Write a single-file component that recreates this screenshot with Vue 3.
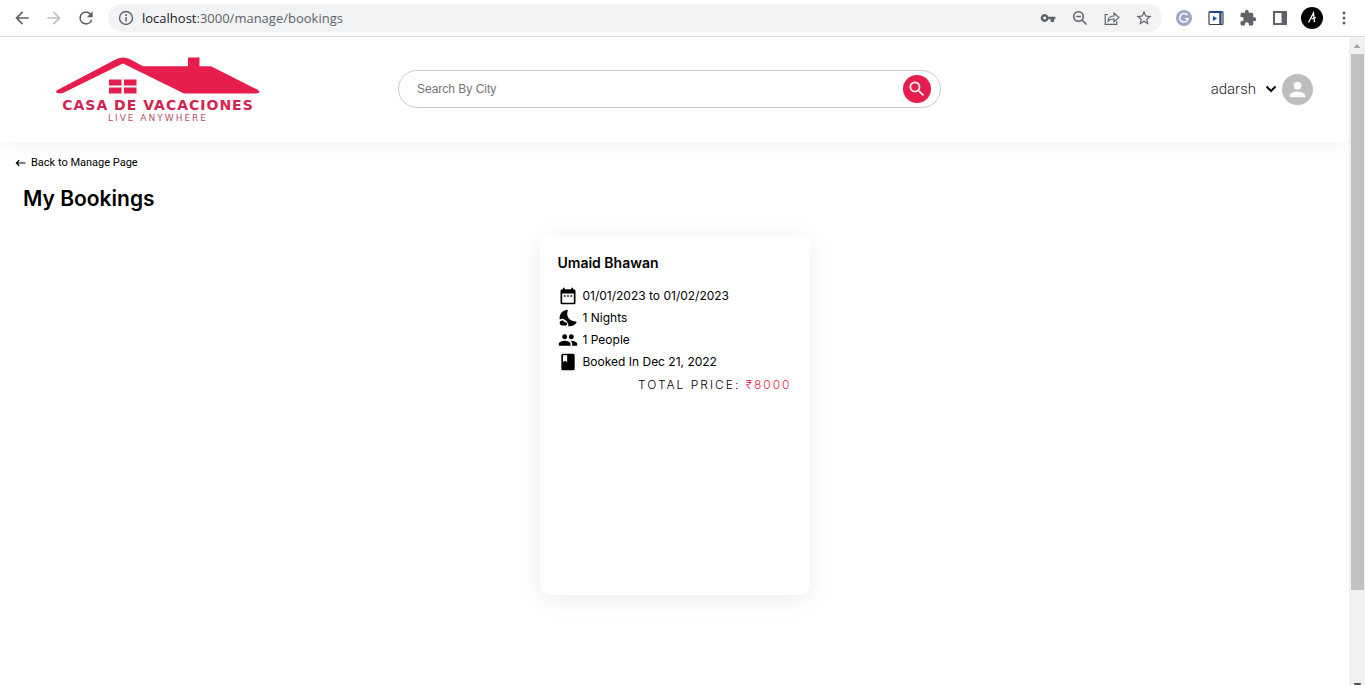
<script setup>
import { ref } from 'vue'

const address = ref('localhost:3000/manage/bookings')
const city = ref('')

const bookings = [
  {
    name: 'Umaid Bhawan',
    price: '₹8000',
    details: [
      {
        text: '01/01/2023 to 01/02/2023',
        icon: 'M19 4h-1V2h-2v2H8V2H6v2H5c-1.110 0-1.990.9-1.990 2L3 20c0 1.100.89 2 2 2h14c1.100 0 2-.9 2-2V6c0-1.100-.9-2-2-2zm0 16H5V9h14v11zM7 11h2v2H7zm4 0h2v2h-2zm4 0h2v2h-2z'
      },
      {
        text: '1 Nights',
        icon: 'M11.650 3.460c.27-.71-.36-1.450-1.120-1.340-5.520.8-9.470 5.960-8.430 11.750.02.110.05.210.07.320C2.940 13.440 3.930 13 5 13c1.440 0 2.770.66 3.630 1.740 1.340.29 2.370 1.380 2.570 2.750 1.350 1.050 1.620 2.900.99 4.300.59.130 1.190.210 1.810.210 3.350 0 6.320-1.650 8.140-4.180.45-.61.05-1.490-.71-1.540C13.790 15.800 9.230 9.850 11.650 3.460zM7.490 16.560C7.110 15.660 6.130 15 5 15c-1.660 0-3 1.340-3 3s1.340 3 3 3h4c1.100 0 2-.9 2-2s-.9-2-2-2c-.5-.1-1-.3-1.510-.440z'
      },
      {
        text: '1 People',
        icon: 'M16 11c1.660 0 2.990-1.340 2.990-3S17.660 5 16 5s-3 1.340-3 3 1.340 3 3 3zm-8 0c1.660 0 2.990-1.340 2.990-3S9.660 5 8 5 5 6.340 5 8s1.340 3 3 3zm0 2c-2.330 0-7 1.170-7 3.500V19h14v-2.500c0-2.330-4.670-3.500-7-3.500zm8 0c-.29 0-.62.020-.97.050 1.160.84 1.970 1.970 1.970 3.450V19h6v-2.500c0-2.330-4.670-3.500-7-3.500z'
      },
      {
        text: 'Booked In Dec 21, 2022',
        icon: 'M18 2H6c-1.100 0-2 .9-2 2v16c0 1.100.9 2 2 2h12c1.100 0 2-.9 2-2V4c0-1.100-.9-2-2-2zM6 4h5v8l-2.500-1.500L6 12V4z'
      }
    ]
  }
]
</script>

<template>
  <div class="window">
    <div class="toolbar">
      <button class="tool" aria-label="Back">
        <svg viewBox="0 0 24 24" class="i20"><path d="M20 11H7.830l5.590-5.590L12 4l-8 8 8 8 1.410-1.410L7.830 13H20z" /></svg>
      </button>
      <button class="tool faded" aria-label="Forward">
        <svg viewBox="0 0 24 24" class="i20"><path d="M12 4l-1.410 1.410L16.170 11H4v2h12.170l-5.580 5.590L12 20l8-8z" /></svg>
      </button>
      <button class="tool" aria-label="Reload">
        <svg viewBox="0 0 24 24" class="i20"><path d="M17.650 6.350A7.960 7.960 0 0 0 12 4a8 8 0 1 0 7.730 10h-2.080A6 6 0 1 1 12 6c1.660 0 3.140.69 4.220 1.780L13 11h7V4z" /></svg>
      </button>
      <div class="address">
        <svg viewBox="0 0 16 16" class="i16"><circle cx="8" cy="8" r="6.500" fill="none" stroke="currentColor" stroke-width="1.400" /><path d="M7.200 7h1.600v4.500H7.200zM7.200 4.300h1.600v1.600H7.200z" /></svg>
        <span class="url"><input v-model="address" aria-label="Address" class="urlbox" /><span class="urltext" aria-hidden="true"><b>localhost</b>:3000/manage/bookings</span></span>
        <button class="tool" aria-label="Passwords">
          <svg viewBox="0 0 24 24" class="i16"><path d="M12.650 10A6 6 0 1 0 12.650 14H16v4h5v-4h2v-4H12.650zM7 14.200a2.200 2.200 0 1 1 0-4.400 2.200 2.200 0 0 1 0 4.400z" /></svg>
        </button>
        <button class="tool" aria-label="Zoom">
          <svg viewBox="0 0 16 16" class="i16 line"><circle cx="6.500" cy="6.500" r="4.800" /><path d="M10 10l4.500 4.500M4.200 6.500h4.600" /></svg>
        </button>
        <button class="tool" aria-label="Share">
          <svg viewBox="0 0 16 16" class="i16 line thin"><path d="M4 4.500H1.200v9.800h11.600v-3M4 11c.4-3.500 2.500-5 6-5V3l5 4.600-5 4.200V9c-2.700 0-4.500.5-6 2z" /></svg>
        </button>
        <button class="tool" aria-label="Bookmark">
          <svg viewBox="0 0 24 24" class="i18"><path d="M22 9.240l-7.190-.62L12 2 9.190 8.630 2 9.240l5.460 4.730L5.820 21 12 17.270 18.180 21l-1.630-7.030L22 9.240zM12 15.400l-3.760 2.270 1-4.280-3.320-2.880 4.380-.38L12 6.100l1.710 4.040 4.380.38-3.320 2.880 1 4.280L12 15.400z" /></svg>
        </button>
      </div>
      <div class="extensions">
        <button class="tool" aria-label="Grammar extension">
          <svg viewBox="0 0 16 16" class="i16"><circle cx="8" cy="8" r="8" fill="#9fa8c7" /><path d="M11.500 5.200A4.300 4.300 0 1 0 12.200 8.800H9.200" fill="none" stroke="#fff" stroke-width="1.400" /></svg>
        </button>
        <button class="tool" aria-label="Player extension">
          <svg viewBox="0 0 16 16" class="i16"><rect x="1" y="1.500" width="14" height="13" rx="1" fill="#fff" stroke="#3c4043" stroke-width="1.200" /><path d="M13 2h1.400v12H13z" fill="#8a8f96" /><path d="M2 1h12v2H2zM11.300 2h1.700v12h-1.700z" fill="#1f4690" /><path d="M5 6l4 2.500L5 11z" fill="#174ea6" /></svg>
        </button>
        <button class="tool" aria-label="Extensions">
          <svg viewBox="0 0 24 24" class="i18"><path d="M20.500 11H19V7c0-1.100-.9-2-2-2h-4V3.500a2.500 2.500 0 0 0-5 0V5H4c-1.100 0-2 .9-2 2v3.800h1.500a2.700 2.700 0 0 1 0 5.400H2V20c0 1.100.9 2 2 2h3.800v-1.500a2.700 2.700 0 0 1 5.400 0V22H17c1.100 0 2-.9 2-2v-4h1.500a2.500 2.500 0 0 0 0-5z" /></svg>
        </button>
        <button class="tool" aria-label="Side panel">
          <svg viewBox="0 0 16 16" class="i16"><path d="M1 1h14v14H1zM3 3v10h6.500V3z" fill-rule="evenodd" /></svg>
        </button>
        <button class="tool" aria-label="Profile">
          <svg viewBox="0 0 22 22" class="i22"><circle cx="11" cy="11" r="11" fill="#000" /><path d="M7.500 15.500l5-9.500 1 9M10.500 12l4.500-1.500" fill="none" stroke="#fff" stroke-width="1.300" /></svg>
        </button>
        <button class="tool" aria-label="Menu">
          <svg viewBox="0 0 16 16" class="i16"><circle cx="8" cy="3" r="1.500" /><circle cx="8" cy="8" r="1.500" /><circle cx="8" cy="13" r="1.500" /></svg>
        </button>
      </div>
    </div>

    <div class="viewport">
      <div class="page">
        <header class="header">
          <a href="#" class="logo">
            <svg viewBox="0 0 204 38" class="roof" aria-hidden="true">
              <path d="M1.500 33L60 2.200Q67 -1.200 74 2.200L87 9.200H132V.5h11.500V9.200H155L202 33Q206 36.500 199 36.500H128L67 6.500 8 35.500Q5 37 1.500 36 -1.500 34.500 1.500 33z" />
              <path d="M53 22.500h12.500v6H53zM68 22.500h12.500v6H68zM53 30.500h12.500v6H53zM68 30.500h12.500v6H68z" />
            </svg>
            <span class="brand">CASA DE VACACIONES</span>
            <span class="motto">LIVE ANYWHERE</span>
          </a>
          <form class="search" @submit.prevent>
            <input v-model="city" type="text" placeholder="Search By City" aria-label="Search By City" />
            <button aria-label="Search">
              <svg viewBox="0 0 24 24"><path d="M15.500 14h-.79l-.28-.27A6.470 6.470 0 0 0 16 9.500 6.500 6.500 0 1 0 9.500 16c1.610 0 3.090-.59 4.230-1.570l.27.28v.79l5 4.990L20.490 19l-4.990-5zm-6 0C7.010 14 5 11.990 5 9.500S7.010 5 9.500 5 14 7.010 14 9.500 11.990 14 9.500 14z" /></svg>
            </button>
          </form>
          <button class="user">
            <span class="username">adarsh</span>
            <svg viewBox="0 0 12 8" class="chevron"><path d="M1.500 1.500L6 6l4.500-4.500" /></svg>
            <svg viewBox="0 0 32 32" class="avatar"><circle cx="16" cy="16" r="16" fill="#bdbdbd" /><path d="M16 16a4 4 0 1 0 0-8 4 4 0 0 0 0 8zm0 2c-2.700 0-8 1.400-8 4v2h16v-2c0-2.600-5.300-4-8-4z" fill="#fafafa" /></svg>
          </button>
        </header>

        <main class="content">
          <a href="#" class="back">
            <svg viewBox="0 0 12 8" class="arrow"><path d="M11.500 4H1.500M4.500 1L1.500 4l3 3" /></svg>
            Back to Manage Page
          </a>
          <h1>My Bookings</h1>
          <div class="cards">
            <article v-for="booking in bookings" :key="booking.name" class="card">
              <h2>{{ booking.name }}</h2>
              <ul>
                <li v-for="detail in booking.details" :key="detail.text">
                  <svg viewBox="0 0 24 24" class="i20"><path :d="detail.icon" /></svg>
                  {{ detail.text }}
                </li>
              </ul>
              <p>TOTAL PRICE: <strong>{{ booking.price }}</strong></p>
            </article>
          </div>
        </main>
      </div>
      <div class="scrollbar" aria-hidden="true">
        <svg viewBox="0 0 16 17" class="cap"><path d="M4.500 11L8 7l3.500 4z" fill="#a3a3a3" /></svg>
        <div class="thumb"></div>
        <svg viewBox="0 0 16 3" class="end"><path d="M5 1h7v1l-1 1H6L5 2z" fill="#505050" /></svg>
      </div>
    </div>
  </div>
</template>

<style>
body {
  background: #fff;
}
</style>

<style scoped>
* {
  box-sizing: border-box;
}
.window {
  height: 100vh;
  display: flex;
  flex-direction: column;
  overflow: hidden;
  color: #000;
  font-family: Inter, "Liberation Sans", sans-serif;
}
svg {
  display: block;
  flex: none;
  fill: currentColor;
}
button {
  border: 0;
  padding: 0;
  background: none;
  font: inherit;
  color: inherit;
  cursor: pointer;
}
.i16 { width: 16px; height: 16px; }
.i18 { width: 18px; height: 18px; }
.i20 { width: 20px; height: 20px; }
.i22 { width: 22px; height: 22px; }
.line {
  fill: none;
  stroke: currentColor;
  stroke-width: 1.5;
}
.thin { stroke-width: 1.2; }

.toolbar {
  flex: none;
  height: 37px;
  display: flex;
  align-items: center;
  padding: 0 5px 1px 6px;
  border-bottom: 1px solid #dadce0;
  color: #5f6368;
}
.tool {
  width: 32px;
  height: 28px;
  flex: none;
  display: flex;
  align-items: center;
  justify-content: center;
}
.faded { color: #bdbfc2; }
.address {
  flex: 1;
  min-width: 0;
  height: 28px;
  display: flex;
  align-items: center;
  margin-left: 6px;
  padding: 0 2px 0 10px;
  border-radius: 14px;
  background: #f1f3f4;
}
.url {
  position: relative;
  flex: 1;
  min-width: 0;
  margin-left: 8px;
  font: 13px/20px "Open Sans", "Noto Sans", sans-serif;
}
.urlbox {
  position: absolute;
  inset: 0;
  width: 100%;
  border: 0;
  padding: 0;
  background: none;
  font: inherit;
  color: transparent;
  outline: none;
}
.urltext { white-space: nowrap; }
.urltext b {
  color: #202124;
  font-weight: 400;
}
.extensions {
  display: flex;
  margin-left: 6px;
}

.viewport {
  flex: 1;
  min-height: 0;
  display: flex;
}
.page {
  flex: 1;
  min-width: 0;
  overflow: hidden;
}
.header {
  display: grid;
  grid-template-columns: 1fr minmax(0, 543px) 1fr;
  align-items: center;
  height: 105px;
  padding: 0 36px 1px 26px;
  box-shadow: 0 2px 16px rgba(0, 0, 0, 0.06);
}
.logo {
  width: 204px;
  margin-left: 30px;
  padding-top: 2px;
  display: flex;
  flex-direction: column;
  align-items: center;
  color: #e61e4d;
  text-decoration: none;
  white-space: nowrap;
}
.roof {
  width: 204px;
  height: 38px;
}
.brand {
  margin-top: 2px;
  font: bold 14px/16px "DejaVu Sans", sans-serif;
  letter-spacing: 1px;
  color: #d4234e;
}
.motto {
  font: 9px/10px "DejaVu Sans", sans-serif;
  letter-spacing: 2px;
  color: #b7506c;
}
.search {
  display: flex;
  align-items: center;
  height: 38px;
  padding: 0 9px 0 18px;
  border: 1px solid #ccc;
  border-radius: 19px;
}
.search input {
  flex: 1;
  min-width: 0;
  border: 0;
  padding: 0;
  outline: none;
  background: none;
  font: 12px/16px "Liberation Sans", Arial, sans-serif;
}
.search input::placeholder { color: #757575; }
.search button {
  width: 28px;
  height: 28px;
  display: grid;
  place-items: center;
  border-radius: 50%;
  background: #e61e4d;
  color: #fff;
}
.search svg {
  width: 20px;
  height: 20px;
}
.user {
  justify-self: end;
  display: flex;
  align-items: center;
}
.username {
  font: 300 15px/20px Roboto, sans-serif;
  color: #222;
}
.chevron {
  width: 12px;
  height: 8px;
  margin: 0 5px 0 9px;
  fill: none;
  stroke: #000;
  stroke-width: 2;
}
.avatar {
  width: 31px;
  height: 31px;
}

.content { padding-top: 9px; }
.back {
  display: inline-flex;
  align-items: center;
  gap: 5px;
  margin-left: 15px;
  font-family: Roboto, sans-serif;
  font-size: 11px;
  line-height: 18px;
  color: #000;
  text-decoration: none;
}
.arrow {
  width: 11px;
  height: 8px;
  fill: none;
  stroke: #000;
  stroke-width: 1.3;
}
h1 {
  margin: 11px 23px 20px;
  font-size: 21px;
  line-height: 32px;
  font-weight: 600;
}
.cards {
  display: flex;
  flex-wrap: wrap;
  justify-content: center;
  gap: 24px;
}
.card {
  width: 270px;
  min-height: 360px;
  padding: 18px;
  border-radius: 10px;
  background: #fff;
  box-shadow: 0 4px 24px rgba(0, 0, 0, 0.08);
}
h2 {
  margin: 0 0 12px;
  font-size: 14px;
  line-height: 20px;
  font-weight: 600;
}
ul {
  margin: 0;
  padding: 0;
  list-style: none;
}
li {
  display: flex;
  align-items: center;
  gap: 5px;
  font-size: 12px;
  line-height: 22px;
}
p {
  margin: 2px 0 0;
  font-size: 12px;
  line-height: 20px;
  letter-spacing: 2px;
  font-weight: 300;
  text-align: right;
}
p strong {
  color: #e61e4d;
  font-weight: 300;
}

.scrollbar {
  flex: none;
  width: 16px;
  display: flex;
  flex-direction: column;
  background: #f1f1f1;
}
.cap {
  width: 16px;
  height: 17px;
}
.thumb {
  height: calc(83% - 2px);
  margin: 0 1px 0 2px;
  background: #c1c1c1;
}
.end {
  width: 16px;
  height: 3px;
  margin-top: auto;
}
</style>
